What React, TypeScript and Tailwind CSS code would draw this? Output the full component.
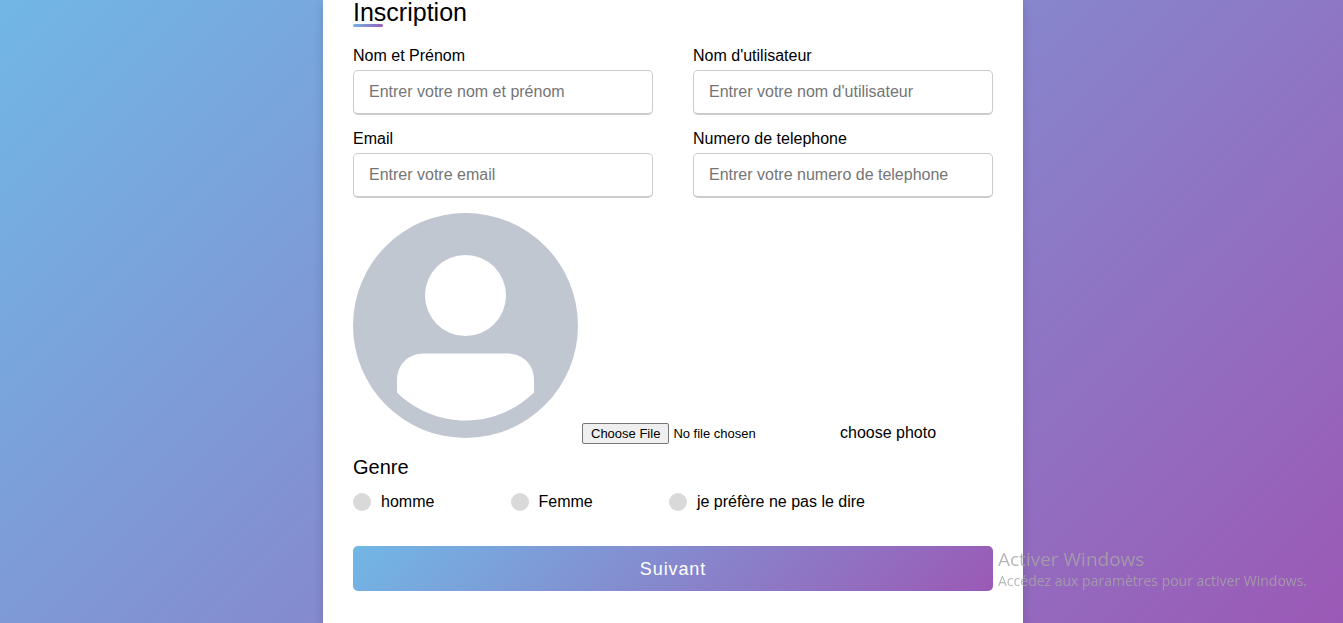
import type { InputHTMLAttributes } from "react";

type FieldProps = InputHTMLAttributes<HTMLInputElement> & {
  id: string;
  label: string;
};

const genders = [
  { id: "homme", label: "homme" },
  { id: "femme", label: "Femme" },
  { id: "autre", label: "je préfère ne pas le dire" },
];

function Field({ id, label, ...props }: FieldProps) {
  return (
    <div>
      <label htmlFor={id} className="block mb-[5px] leading-[18px]">
        {label}
      </label>
      <input
        id={id}
        name={id}
        className="block w-full h-[45px] pl-[15px] pr-4 rounded-[5px] border border-b-2 border-[#ccc] bg-white text-base outline-none placeholder:text-[#757575] focus:border-[#9b59b6]"
        {...props}
      />
    </div>
  );
}

function Avatar() {
  return (
    <svg viewBox="0 0 225 225" className="w-[225px] h-[225px] shrink-0" aria-hidden="true">
      <circle cx="112.5" cy="112.5" r="112.5" fill="#c1c7d1" />
      <circle cx="112.5" cy="82.5" r="40.5" fill="#fff" />
      <path
        d="M44 179.5V167C44 151.5 55.5 140.5 71 140.5H154C169.5 140.5 181 151.5 181 167V179.5C163 197 139 207.500 112.500 207.500S62 197 44 179.500Z"
        fill="#fff"
      />
    </svg>
  );
}

export default function App() {
  return (
    <div className="min-h-screen flex justify-center pl-[3px] bg-linear-[135deg] from-[#71b7e6] to-[#9b59b6] font-['Liberation_Sans',Arial,sans-serif] text-base text-black">
      <main className="w-full max-w-[700px] px-[30px] pb-8 bg-white shadow-[0_5px_10px_rgba(0,0,0,0.15)]">
        <h1 className="text-[25px] leading-[24px]">Inscription</h1>
        <div className="w-[30px] h-[3px] rounded-[5px] bg-linear-[135deg] from-[#71b7e6] to-[#9b59b6]" />

        <form className="mt-5" onSubmit={(e) => e.preventDefault()}>
          <div className="grid sm:grid-cols-2 gap-x-10 gap-y-[15px]">
            <Field id="nom" label="Nom et Prénom" type="text" placeholder="Entrer votre nom et prénom" />
            <Field id="utilisateur" label="Nom d'utilisateur" type="text" placeholder="Entrer votre nom d'utilisateur" />
            <Field id="email" label="Email" type="email" placeholder="Entrer votre email" />
            <Field id="telephone" label="Numero de telephone" type="tel" placeholder="Entrer votre numero de telephone" />
          </div>

          <div className="mt-[15px] flex flex-wrap items-baseline gap-x-1">
            <Avatar />
            <input
              id="photo"
              name="photo"
              type="file"
              accept="image/*"
              className="w-[254px] text-[13px] leading-[15px] file:mr-1 file:px-2 file:py-[2px] file:rounded-[2px] file:border file:border-solid file:border-[#767676] file:bg-[#efefef]"
            />
            <label htmlFor="photo" className="leading-[18px]">
              choose photo
            </label>
          </div>

          <fieldset className="mt-[11px]">
            <legend className="text-xl leading-6">Genre</legend>
            <div className="mt-[14px] sm:w-4/5 flex flex-wrap justify-between">
              {genders.map(({ id, label }) => (
                <label key={id} htmlFor={id} className="flex items-center gap-[10px] leading-[18px]">
                  <input
                    id={id}
                    type="radio"
                    name="genre"
                    value={id}
                    className="appearance-none size-[18px] rounded-full bg-[#d9d9d9] checked:bg-[#9b59b6]"
                  />
                  {label}
                </label>
              ))}
            </div>
          </fieldset>

          <button
            type="submit"
            className="mt-[35px] w-full h-[45px] rounded-[5px] bg-linear-[135deg] from-[#71b7e6] to-[#9b59b6] text-lg font-medium tracking-wider text-white"
          >
            Suivant
          </button>
        </form>
      </main>

      {/* system activation notice, floats above everything */}
      <div className="fixed right-8 bottom-8 w-[313px] whitespace-nowrap pointer-events-none font-['Open_Sans','Noto_Sans',sans-serif] text-[#a6a6a6]/80">
        <p className="text-[19px] leading-6">Activer Windows</p>
        <p className="text-[14px] leading-5">Accédez aux paramètres pour activer Windows.</p>
      </div>
    </div>
  );
}
